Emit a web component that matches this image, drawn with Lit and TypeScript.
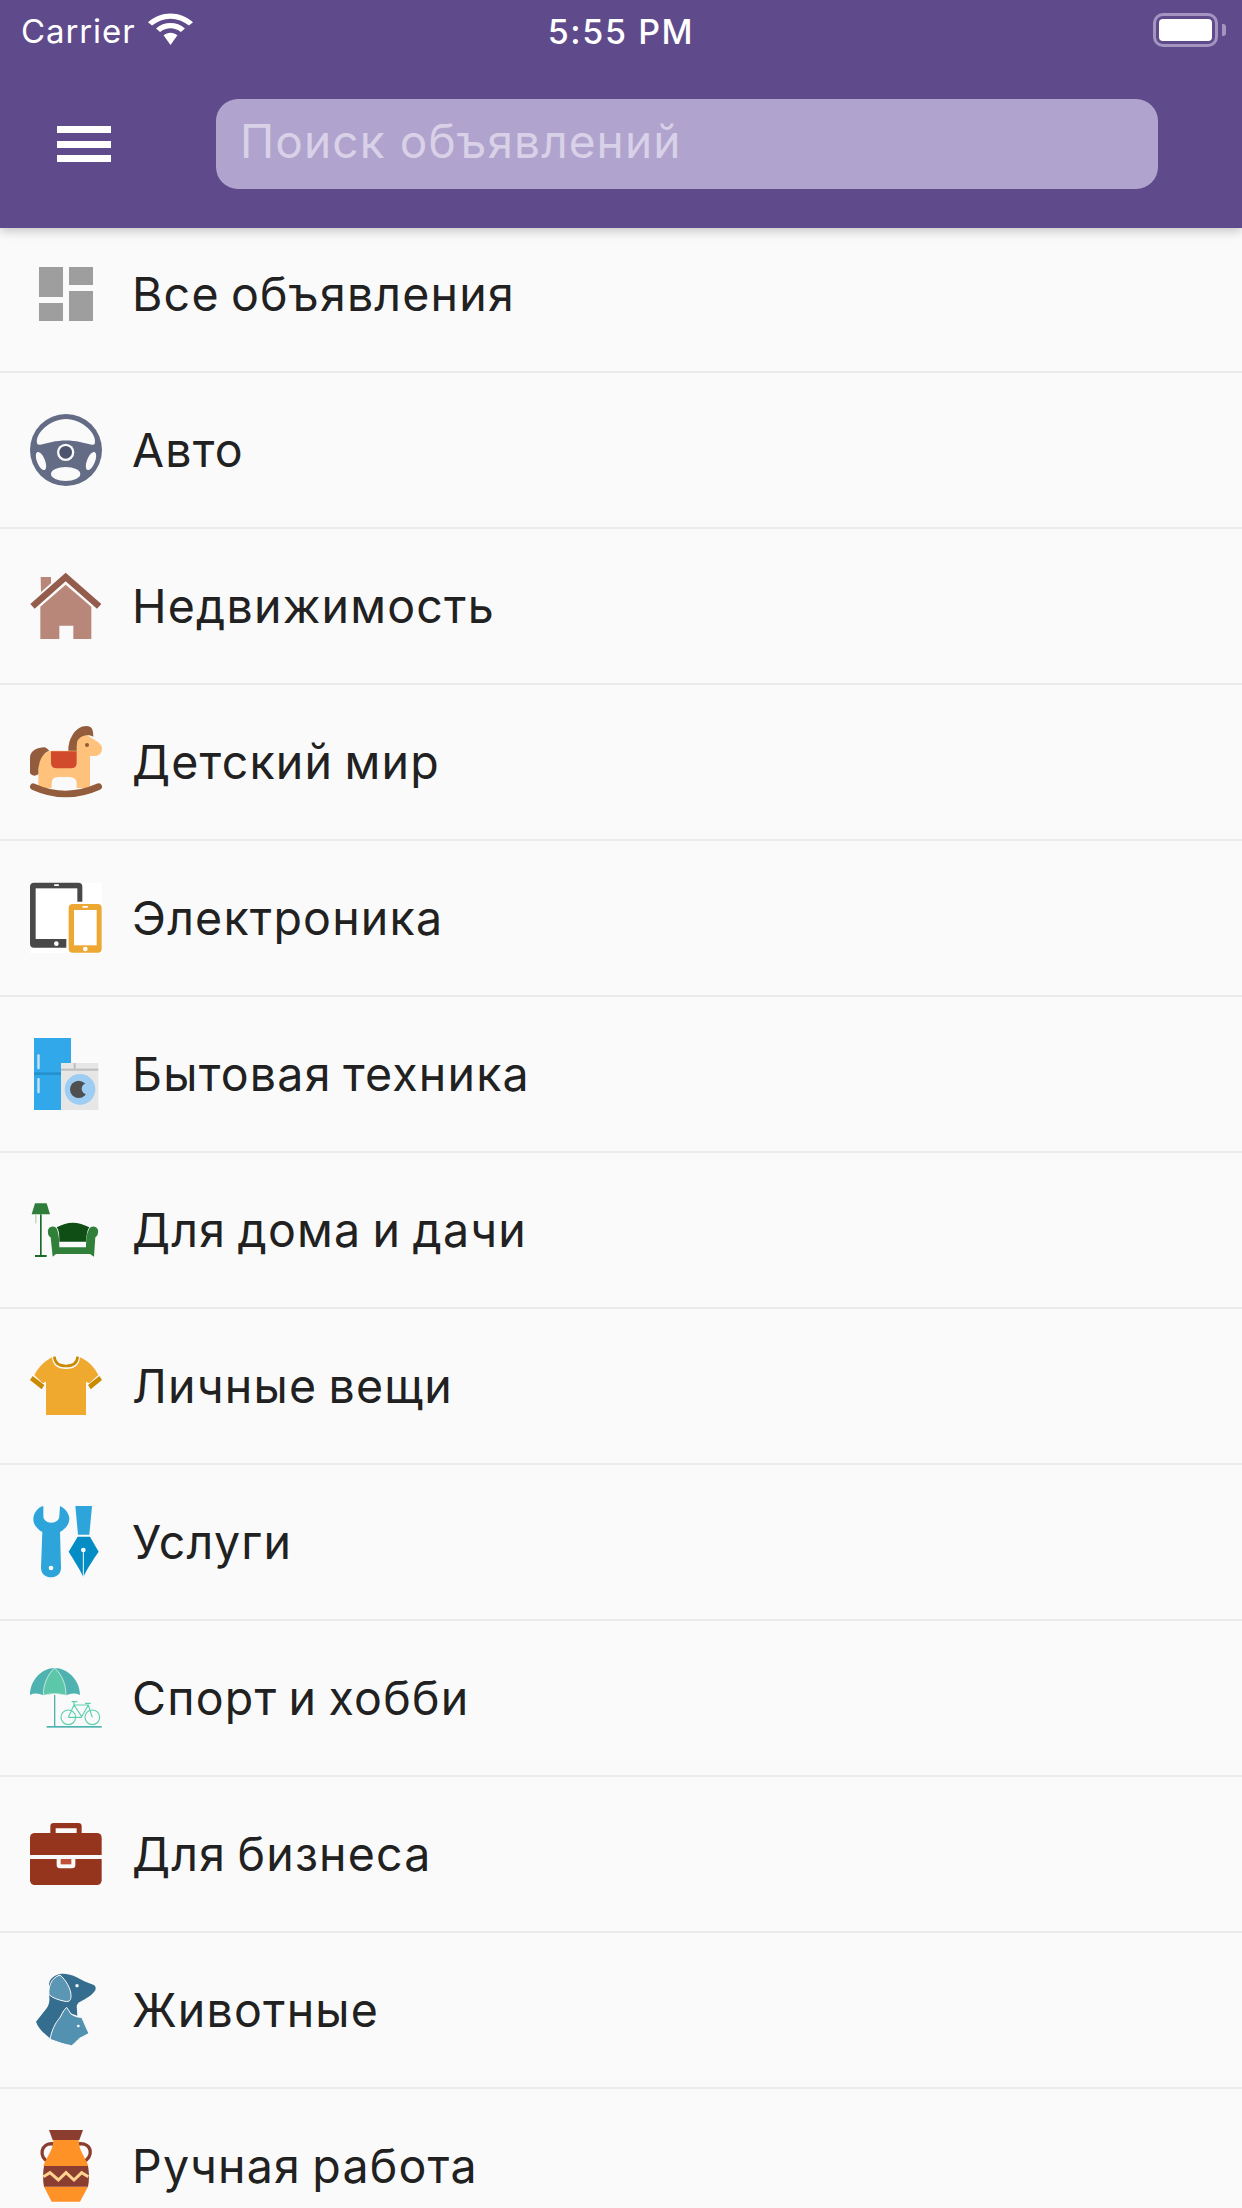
import { LitElement, html, css, svg } from "lit";
import { customElement } from "lit/decorators.js";

const BG = "#fafafa";

const icons = {
  all: svg`<g fill="#9e9e9e"><rect x="27" y="27" width="72" height="90"/><rect x="117" y="27" width="72" height="54"/><rect x="27" y="135" width="72" height="54"/><rect x="117" y="99" width="72" height="90"/></g>`,
  auto: svg`<circle cx="108" cy="108" r="108" fill="#636b85"/>
    <path fill="${BG}" d="M22 90C12 60 60 15 108 15C156 15 204 60 194 90C190 95 175 90 150 84C125 78 91 78 66 84C41 90 26 95 22 90Z"/>
    <ellipse cx="33" cy="141" rx="12" ry="29" transform="rotate(-22 33 141)" fill="${BG}"/>
    <ellipse cx="183" cy="141" rx="12" ry="29" transform="rotate(22 183 141)" fill="${BG}"/>
    <ellipse cx="107" cy="180" rx="44" ry="21" fill="${BG}"/>
    <circle cx="107" cy="115" r="26" fill="${BG}"/><circle cx="107" cy="115" r="19" fill="#4d5470"/>`,
  house: svg`<polygon fill="#b8877a" points="32,21 63,21 63,40 33,66"/>
    <polygon fill="#b8877a" points="107,44 184,110 184,207 130,207 130,167 88,167 88,207 31,207 31,110"/>
    <polygon fill="#935c4c" points="1,102 107,8 214,102 201,116 107,34 14,116"/>`,
  horse: svg`<path fill="#ffc27d" d="M25 186V130C25 100 40 74 70 74H118V50C118 30 140 22 165 24L198 44Q216 54 216 68Q216 90 190 90H180V186H140V172Q140 155 120 153H85Q65 153 65 172V186Z"/>
    <path fill="#935c3c" d="M115 74C115 40 135 0 170 0C185 0 190 10 190 32C170 22 150 30 142 45C140 55 140 65 140 74Z"/>
    <path fill="#935c3c" d="M0 142V95C0 75 20 64 45 64Q52 68 58 74C40 80 28 100 25 130L25 145Q10 155 0 142Z"/>
    <path fill="#d14a2b" d="M63 76H140V110Q140 127 123 127H80Q63 127 63 110Z"/>
    <circle cx="171" cy="57" r="6" fill="#935c3c"/>
    <path fill="none" stroke="#935c3c" stroke-width="20" stroke-linecap="round" d="M10 182Q107 226 206 182"/>`,
  devices: svg`<rect x="0" y="2" width="216" height="212" fill="#fff"/>
    <rect x="0" y="2" width="157" height="195" rx="12" fill="#484848"/>
    <rect x="17" y="19" width="125" height="152" fill="#fff"/>
    <circle cx="79" cy="185" r="7" fill="#fff"/><rect x="72" y="7" width="15" height="5" rx="2" fill="#fff"/>
    <rect x="109" y="59" width="107" height="155" rx="14" fill="#fff"/>
    <rect x="116" y="66" width="99" height="146" rx="12" fill="#eca832"/>
    <rect x="132" y="84" width="68" height="106" fill="#fff"/>
    <rect x="157" y="72" width="17" height="5" rx="2" fill="#fff"/><circle cx="166" cy="201" r="7" fill="#fff"/>`,
  appliances: svg`<rect x="12" y="0" width="111" height="216" fill="#30a8ea"/>
    <rect x="12" y="103" width="111" height="8" fill="#2490cc"/>
    <rect x="22" y="49" width="7" height="45" rx="3" fill="#cfe4f2"/><rect x="22" y="120" width="7" height="46" rx="3" fill="#cfe4f2"/>
    <rect x="93" y="75" width="112" height="141" fill="#e6e6e6"/>
    <rect x="93" y="92" width="112" height="6" fill="#bdbdbd"/><rect x="131" y="75" width="6" height="17" fill="#bdbdbd"/>
    <circle cx="150" cy="154" r="46" fill="#9dcdf2"/><circle cx="146" cy="154" r="26" fill="#4f4f4f"/><circle cx="172" cy="152" r="17" fill="#9dcdf2"/>`,
  home: svg`<polygon fill="#2f7d3a" points="15,28 50,28 60,61 5,61"/>
    <rect x="30" y="61" width="5" height="123" fill="#1d6b2b"/><rect x="15" y="183" width="35" height="6" fill="#1d6b2b"/>
    <rect x="16" y="61" width="3" height="27" fill="#a5c9a8"/>
    <path fill="#0f4f16" d="M80 100Q128 72 178 100C170 112 170 125 168 143H88C88 125 88 110 80 100Z"/>
    <path fill="#30803a" d="M54 116A14 14 0 0 1 82 108C84 118 88 125 88 160H168C168 125 172 118 176 108A14 14 0 0 1 204 116C204 124 198 128 196 130L192 188L180 180H78L68 188L62 130C58 128 54 124 54 116Z"/>`,
  shirt: svg`<path fill="#efa92e" d="M66 22Q68 57 108 57Q148 57 150 22C175 32 195 55 205 75L178 100L168 95V195H48V95L38 100L13 75C23 55 45 32 66 22Z"/>
    <path fill="none" stroke="#c98a00" stroke-width="8" d="M73 20Q75 48 108 48Q141 48 143 20"/>
    <polygon fill="#c98a00" points="8,78 0,90 35,118 43,105"/><polygon fill="#c98a00" points="208,78 216,90 182,118 174,105"/>`,
  tools: svg`<path fill="#2ea5da" d="M40 0C20 5 10 25 10 40C10 58 25 72 37 78L33 185C33 205 48 214 63 214C78 214 93 205 93 185L90 78C105 70 118 55 118 38C118 25 108 8 90 0L88 30C88 42 78 50 64 50C50 50 40 42 40 30Z"/>
    <circle cx="63" cy="186" r="7" fill="${BG}"/>
    <polygon fill="#2ea5da" points="136,0 186,0 178,86 144,86"/>
    <path fill="#048cc5" d="M143 92H180L206 137C190 160 170 190 160 214C150 190 130 160 116 137Z"/>
    <circle cx="160" cy="132" r="7" fill="${BG}"/><rect x="158.5" y="132" width="3" height="82" fill="${BG}"/>`,
  sport: svg`<path fill="#4eb3b0" d="M0 99C0 55 35 18 74 18C113 18 150 55 150 99Q130 90 108 100Q75 90 40 100Q18 90 0 99Z"/>
    <path fill="#5cc8a9" stroke="${BG}" stroke-width="2" d="M74 18C50 40 40 70 40 100Q75 90 108 100C108 70 98 40 74 18Z"/>
    <rect x="72" y="99" width="4" height="96" fill="#4eb3b0"/><rect x="50" y="192" width="165" height="5" fill="#4eb3b0"/>
    <g fill="none" stroke="#5cd0ae" stroke-width="3.5"><circle cx="115" cy="166" r="22"/><circle cx="187" cy="166" r="22"/>
    <path d="M115 166L132 129H175L187 166M132 129L155 164L175 129M115 166H155M125 119H142M132 119V129M165 124H182"/></g>`,
  biz: svg`<path fill="#96351d" fill-rule="evenodd" d="M71 15H145A10 10 0 0 1 155 25V45H61V25A10 10 0 0 1 71 15ZM77 31V46H140V31Z"/>
    <rect x="0" y="45" width="215" height="156" rx="14" fill="#96351d"/>
    <rect x="0" y="111" width="216" height="12" fill="${BG}"/>
    <path fill="${BG}" d="M80 123H136V141A10 10 0 0 1 126 151H90A10 10 0 0 1 80 141Z"/>
    <rect x="92" y="123" width="32" height="16" fill="#c05038"/>`,
  pets: svg`<path fill="#356d8e" d="M90 0C105 -2 125 2 140 10C155 18 170 26 190 32Q200 36 196 48C190 60 175 70 160 78L145 86L140 95L142 125L100 110L60 193C45 180 25 165 18 143L50 103C58 90 60 78 57 63V30C60 12 75 3 90 0Z"/>
    <path fill="#5b96b4" stroke="${BG}" stroke-width="3" d="M90 3C108 18 123 45 123 65C123 78 120 84 105 82C85 78 68 72 57 62C55 40 62 12 90 3Z"/>
    <path fill="#5391b0" stroke="${BG}" stroke-width="3" d="M60 196C65 170 75 148 88 133C95 125 97 112 110 100L123 120C135 128 145 130 155 130C162 145 170 165 177 178C165 185 155 190 150 192C140 200 135 208 125 215C105 212 85 205 60 196Z"/>
    <circle cx="141" cy="35" r="5" fill="#fff"/><circle cx="145" cy="156" r="4" fill="#fff"/>`,
  vase: svg`<path fill="none" stroke="#8b3e2f" stroke-width="10" d="M72 42C30 35 25 85 56 95M144 42C190 35 190 85 160 95"/>
    <path fill="#ff9226" d="M70 30H146C146 60 165 80 175 108H40C50 80 70 60 70 30Z"/>
    <path fill="#ff9226" d="M42 170H174L150 215H65Z"/>
    <polygon fill="#8b3e2f" points="57,0 159,0 148,30 68,30"/>
    <path fill="#8b3e2f" d="M42 108H174Q180 140 174 170H42Q36 140 42 108Z"/>
    <path fill="none" stroke="#ffd28f" stroke-width="9" d="M40 140L60 128L85 150L108 128L132 150L155 128L175 140"/>`,
};

const rows: [string, keyof typeof icons][] = [
  ["Все объявления", "all"],
  ["Авто", "auto"],
  ["Недвижимость", "house"],
  ["Детский мир", "horse"],
  ["Электроника", "devices"],
  ["Бытовая техника", "appliances"],
  ["Для дома и дачи", "home"],
  ["Личные вещи", "shirt"],
  ["Услуги", "tools"],
  ["Спорт и хобби", "sport"],
  ["Для бизнеса", "biz"],
  ["Животные", "pets"],
  ["Ручная работа", "vase"],
];

@customElement("app-root")
export class AppRoot extends LitElement {
  static styles = css`
    :host { display: block; width: 1242px; height: 2208px; overflow: hidden; background: #fafafa; font-family: Inter, "Noto Sans", sans-serif; }
    .header { position: relative; z-index: 2; height: 228px; background: #5f4b8b; box-shadow: 0 3px 10px rgba(0,0,0,.22); display: flex; flex-direction: column; }
    .status { height: 60px; display: grid; grid-template-columns: 1fr auto 1fr; align-items: center; color: #fff; padding: 2px 16px 0 21px; box-sizing: border-box; }
    .status-left { display: flex; align-items: center; gap: 13px; font-size: 33px; font-weight: 400; letter-spacing: 0.9px; }
    .wifi { width: 45px; height: 33px; margin-top: -3px; }
    .time { font-size: 34px; font-weight: 500; letter-spacing: 1.6px; margin-left: -5px; }
    .battery-wrap { justify-self: end; display: flex; align-items: center; gap: 4px; margin-top: -2px; }
    .battery { width: 65px; height: 34px; box-sizing: border-box; border: 3px solid #a594c0; border-radius: 10px; padding: 3px; }
    .battery i { display: block; height: 100%; background: #fff; border-radius: 4px; }
    .tip { width: 4px; height: 12px; background: #a594c0; border-radius: 0 3px 3px 0; }
    .toolbar { flex: 1; display: flex; align-items: flex-start; padding: 39px 0 0 57px; }
    .menu { width: 54px; height: 36px; margin-top: 27px; margin-right: 105px; display: flex; flex-direction: column; justify-content: space-between; }
    .menu i { display: block; height: 7px; background: #fff; }
    .search { width: 942px; height: 90px; border-radius: 22px; background: #b0a3ce; color: #d9d1e7; font-size: 46px; font-weight: 380; letter-spacing: 1.1px; display: flex; align-items: center; padding: 0 0 6px 24px; box-sizing: border-box; }
    .list { margin-top: -11px; }
    .row { height: 156px; box-sizing: border-box; border-bottom: 2px solid #ebebeb; display: flex; align-items: center; padding-left: 30px; }
    .row svg { width: 72px; height: 72px; flex: none; overflow: visible; }
    .label { margin-left: 30px; font-size: 46.5px; font-weight: 380; letter-spacing: 1.2px; word-spacing: -3px; color: #212121; }
  `;

  render() {
    return html`
      <div class="header">
        <div class="status">
          <div class="status-left">
            <span>Carrier</span>
            <svg class="wifi" viewBox="0 0 39 34" preserveAspectRatio="none"><g fill="#fff"><path d="M0 9.5C11 -2.5 28 -2.5 39 9.5L35.5 13C26 3.5 13 3.5 3.5 13Z"/><path d="M7 16C14 8.5 25 8.5 32 16L28.5 19.5C23 14.5 16 14.5 10.5 19.5Z"/><path d="M13.5 23C17 19.5 22 19.5 25.5 23L19.5 33Z"/></g></svg>
          </div>
          <div class="time">5:55 PM</div>
          <div class="battery-wrap"><div class="battery"><i></i></div><div class="tip"></div></div>
        </div>
        <div class="toolbar">
          <div class="menu"><i></i><i></i><i></i></div>
          <div class="search">Поиск объявлений</div>
        </div>
      </div>
      <div class="list">
        ${rows.map(([t, ic]) => html`<div class="row"><svg viewBox="0 0 216 216">${icons[ic]}</svg><span class="label">${t}</span></div>`)}
      </div>
    `;
  }
}
